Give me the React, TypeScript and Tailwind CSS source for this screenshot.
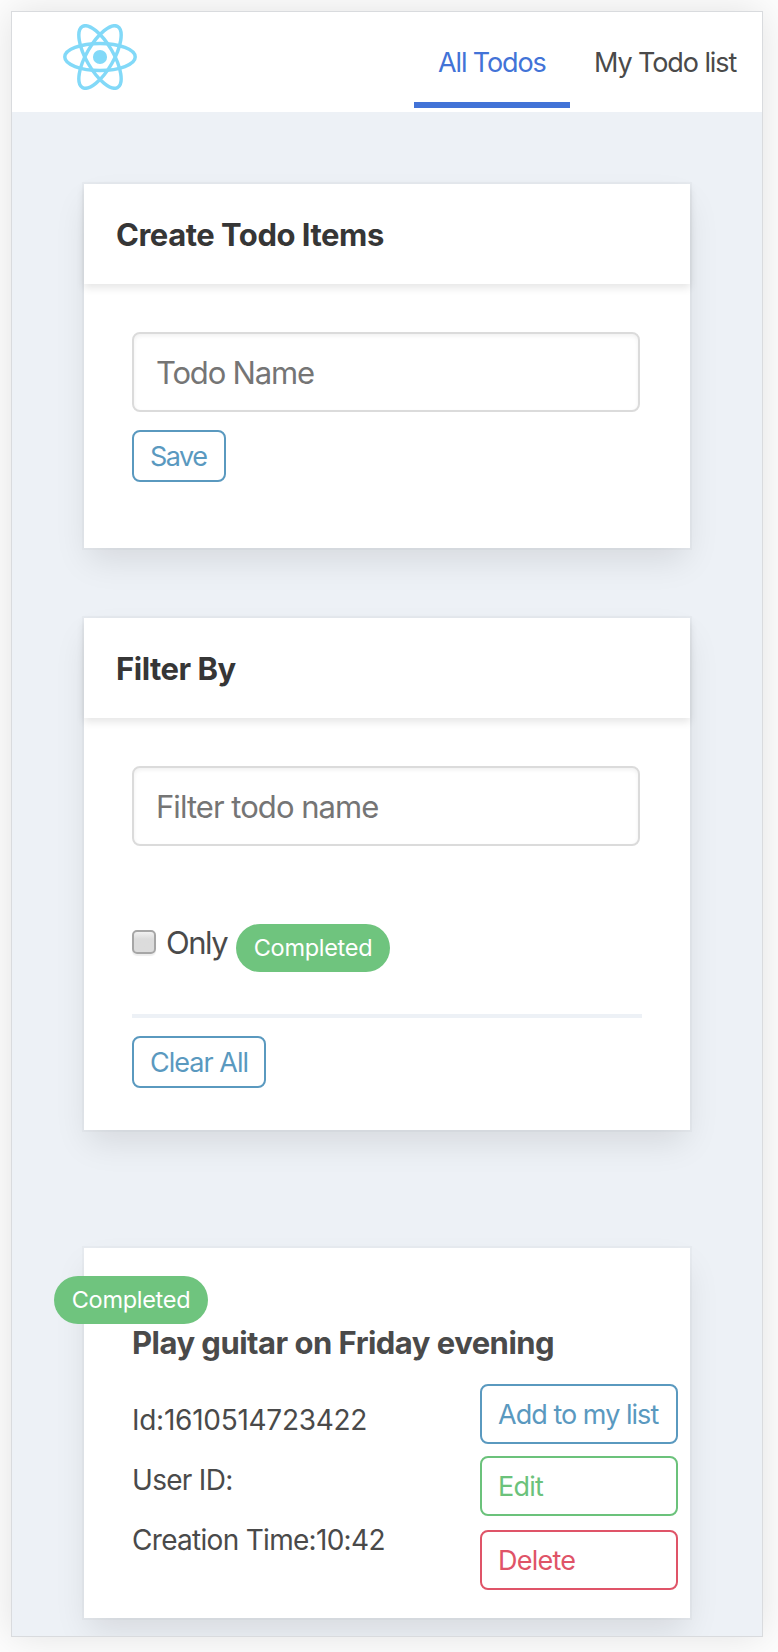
import type { ReactNode } from "react";

const CARD =
  "w-[606px] bg-white shadow-[0_16px_32px_-4px_rgba(10,10,10,0.1),0_0_0_2px_rgba(10,10,10,0.025)]";

function ReactLogo() {
  return (
    <svg className="h-[66px] w-[74px]" viewBox="-11.5 -10.26 23 20.52" aria-label="React">
      <circle r="2.2" fill="#82d9f8" />
      <g fill="none" stroke="#82d9f8" strokeWidth="1.08">
        <ellipse rx="10.95" ry="4.2" />
        <ellipse rx="10.95" ry="4.2" transform="rotate(60)" />
        <ellipse rx="10.95" ry="4.2" transform="rotate(120)" />
      </g>
    </svg>
  );
}

function Panel({ title, className, children }: { title: string; className: string; children: ReactNode }) {
  return (
    <section className={`${CARD} ${className}`}>
      <header className="flex h-[100px] items-center px-8 text-[31px] font-bold tracking-[-0.48px] text-[#363636] shadow-[0_4px_8px_rgba(10,10,10,0.1)]">
        <h2 className="pt-0.5">{title}</h2>
      </header>
      <div className="px-12 pt-12">{children}</div>
    </section>
  );
}

function TextInput({ placeholder, className }: { placeholder: string; className: string }) {
  return (
    <input
      type="text"
      placeholder={placeholder}
      className={`block h-20 w-[508px] rounded-lg border-2 border-[#dbdbdb] bg-white px-[22px] text-[31px] text-[#363636] shadow-[inset_0_2px_4px_rgba(10,10,10,0.06)] outline-none placeholder:text-[#757575] ${className}`}
    />
  );
}

function Badge({ className }: { className: string }) {
  return (
    <span
      className={`flex h-12 w-[154px] items-center justify-center rounded-full bg-[#6fc47e] text-[23.5px] tracking-[-0.3px] text-white ${className}`}
    >
      Completed
    </span>
  );
}

export default function App() {
  return (
    <div className="h-[1652px] w-[778px] overflow-hidden bg-[#fdfdfd] pt-[11px] pl-[11px] font-['Inter','Liberation_Sans',sans-serif]">
      <main className="h-[1626px] w-[752px] border border-[#d9dbde] shadow-[0_0_36px_rgba(0,0,0,0.11)]">
        <div className="h-full overflow-hidden bg-[#edf1f6]">
          <nav className="flex h-[100px] items-start justify-between bg-white pl-[51px]">
            <div className="pt-3">
              <ReactLogo />
            </div>
            <div className="flex text-[27px] leading-10">
              <a className="flex h-24 w-[156px] items-center border-b-6 border-[#4273d7] pt-3 pl-6 tracking-[-1.13px] text-[#4273d7]">
                All Todos
              </a>
              <a className="flex h-24 w-48 items-center border-b-6 border-transparent pt-3 pl-6 tracking-[-1.09px] whitespace-nowrap text-[#4a4a4a]">
                My Todo list
              </a>
            </div>
          </nav>

          <div className="flex flex-col items-start pt-[72px] pl-[72px]">
            <Panel title="Create Todo Items" className="h-[364px]">
              <TextInput placeholder="Todo Name" className="tracking-[-1.17px]" />
              <button className="mt-[18px] block h-[52px] w-[94px] rounded-lg border-2 border-[#5a99bf] pt-0.5 pl-4 text-left text-[27px] tracking-[-1.5px] text-[#5a99bf]">
                Save
              </button>
            </Panel>

            <Panel title="Filter By" className="mt-[70px] h-[512px]">
              <TextInput placeholder="Filter todo name" className="tracking-[-0.96px]" />
              <label className="mt-[78px] flex h-12 items-start text-[#4a4a4a]">
                <span className="mt-1.5 h-6 w-6 rounded-[5px] border-2 border-[#a6a6a6] bg-linear-to-b from-[#f1f1f1] to-[#dcdcdc] to-35% shadow-[0_2px_1px_rgba(0,0,0,0.07)]" />
                <span className="ml-2.5 w-[70px] text-[31px] leading-[37px] tracking-[-1.46px]">Only</span>
                <Badge className="" />
              </label>
              <hr className="mt-[42px] h-1 w-[510px] border-0 bg-[#edf1f6]" />
              <button className="mt-[18px] block h-[52px] w-[134px] rounded-lg border-2 border-[#5a99bf] pt-0.5 pl-4 text-left text-[27px] tracking-[-0.99px] text-[#5a99bf]">
                Clear All
              </button>
            </Panel>

            <article className={`${CARD} relative mt-[118px] h-[370px] pt-[75px] pl-12`}>
              <Badge className="absolute top-7 -left-[30px]" />
              <h3 className="text-[31px] leading-10 font-bold tracking-[-0.52px] text-[#4a4a4a]">
                Play guitar on Friday evening
              </h3>
              <div className="mt-[21px] flex text-[#4a4a4a]">
                <div className="mt-1.5 w-[348px] text-[28px] leading-[60px]">
                  <p className="tracking-[-0.27px]">Id:1610514723422</p>
                  <p className="tracking-[-0.7px]">User ID:</p>
                  <p className="tracking-[-0.7px]">Creation Time:10:42</p>
                </div>
                <div className="w-[198px] text-[27px]">
                  <button className="block h-[60px] w-full rounded-lg border-2 border-[#5a99bf] pt-0.5 pl-4 text-left tracking-[-0.97px] whitespace-nowrap text-[#5a99bf]">
                    Add to my list
                  </button>
                  <button className="mt-3 block h-[60px] w-full rounded-lg border-2 border-[#6bc27b] pt-0.5 pl-4 text-left tracking-[-0.77px] text-[#6bc27b]">
                    Edit
                  </button>
                  <button className="mt-3.5 block h-[60px] w-full rounded-lg border-2 border-[#df5468] pt-0.5 pl-4 text-left tracking-[-0.78px] text-[#df5468]">
                    Delete
                  </button>
                </div>
              </div>
            </article>
          </div>
        </div>
      </main>
    </div>
  );
}
